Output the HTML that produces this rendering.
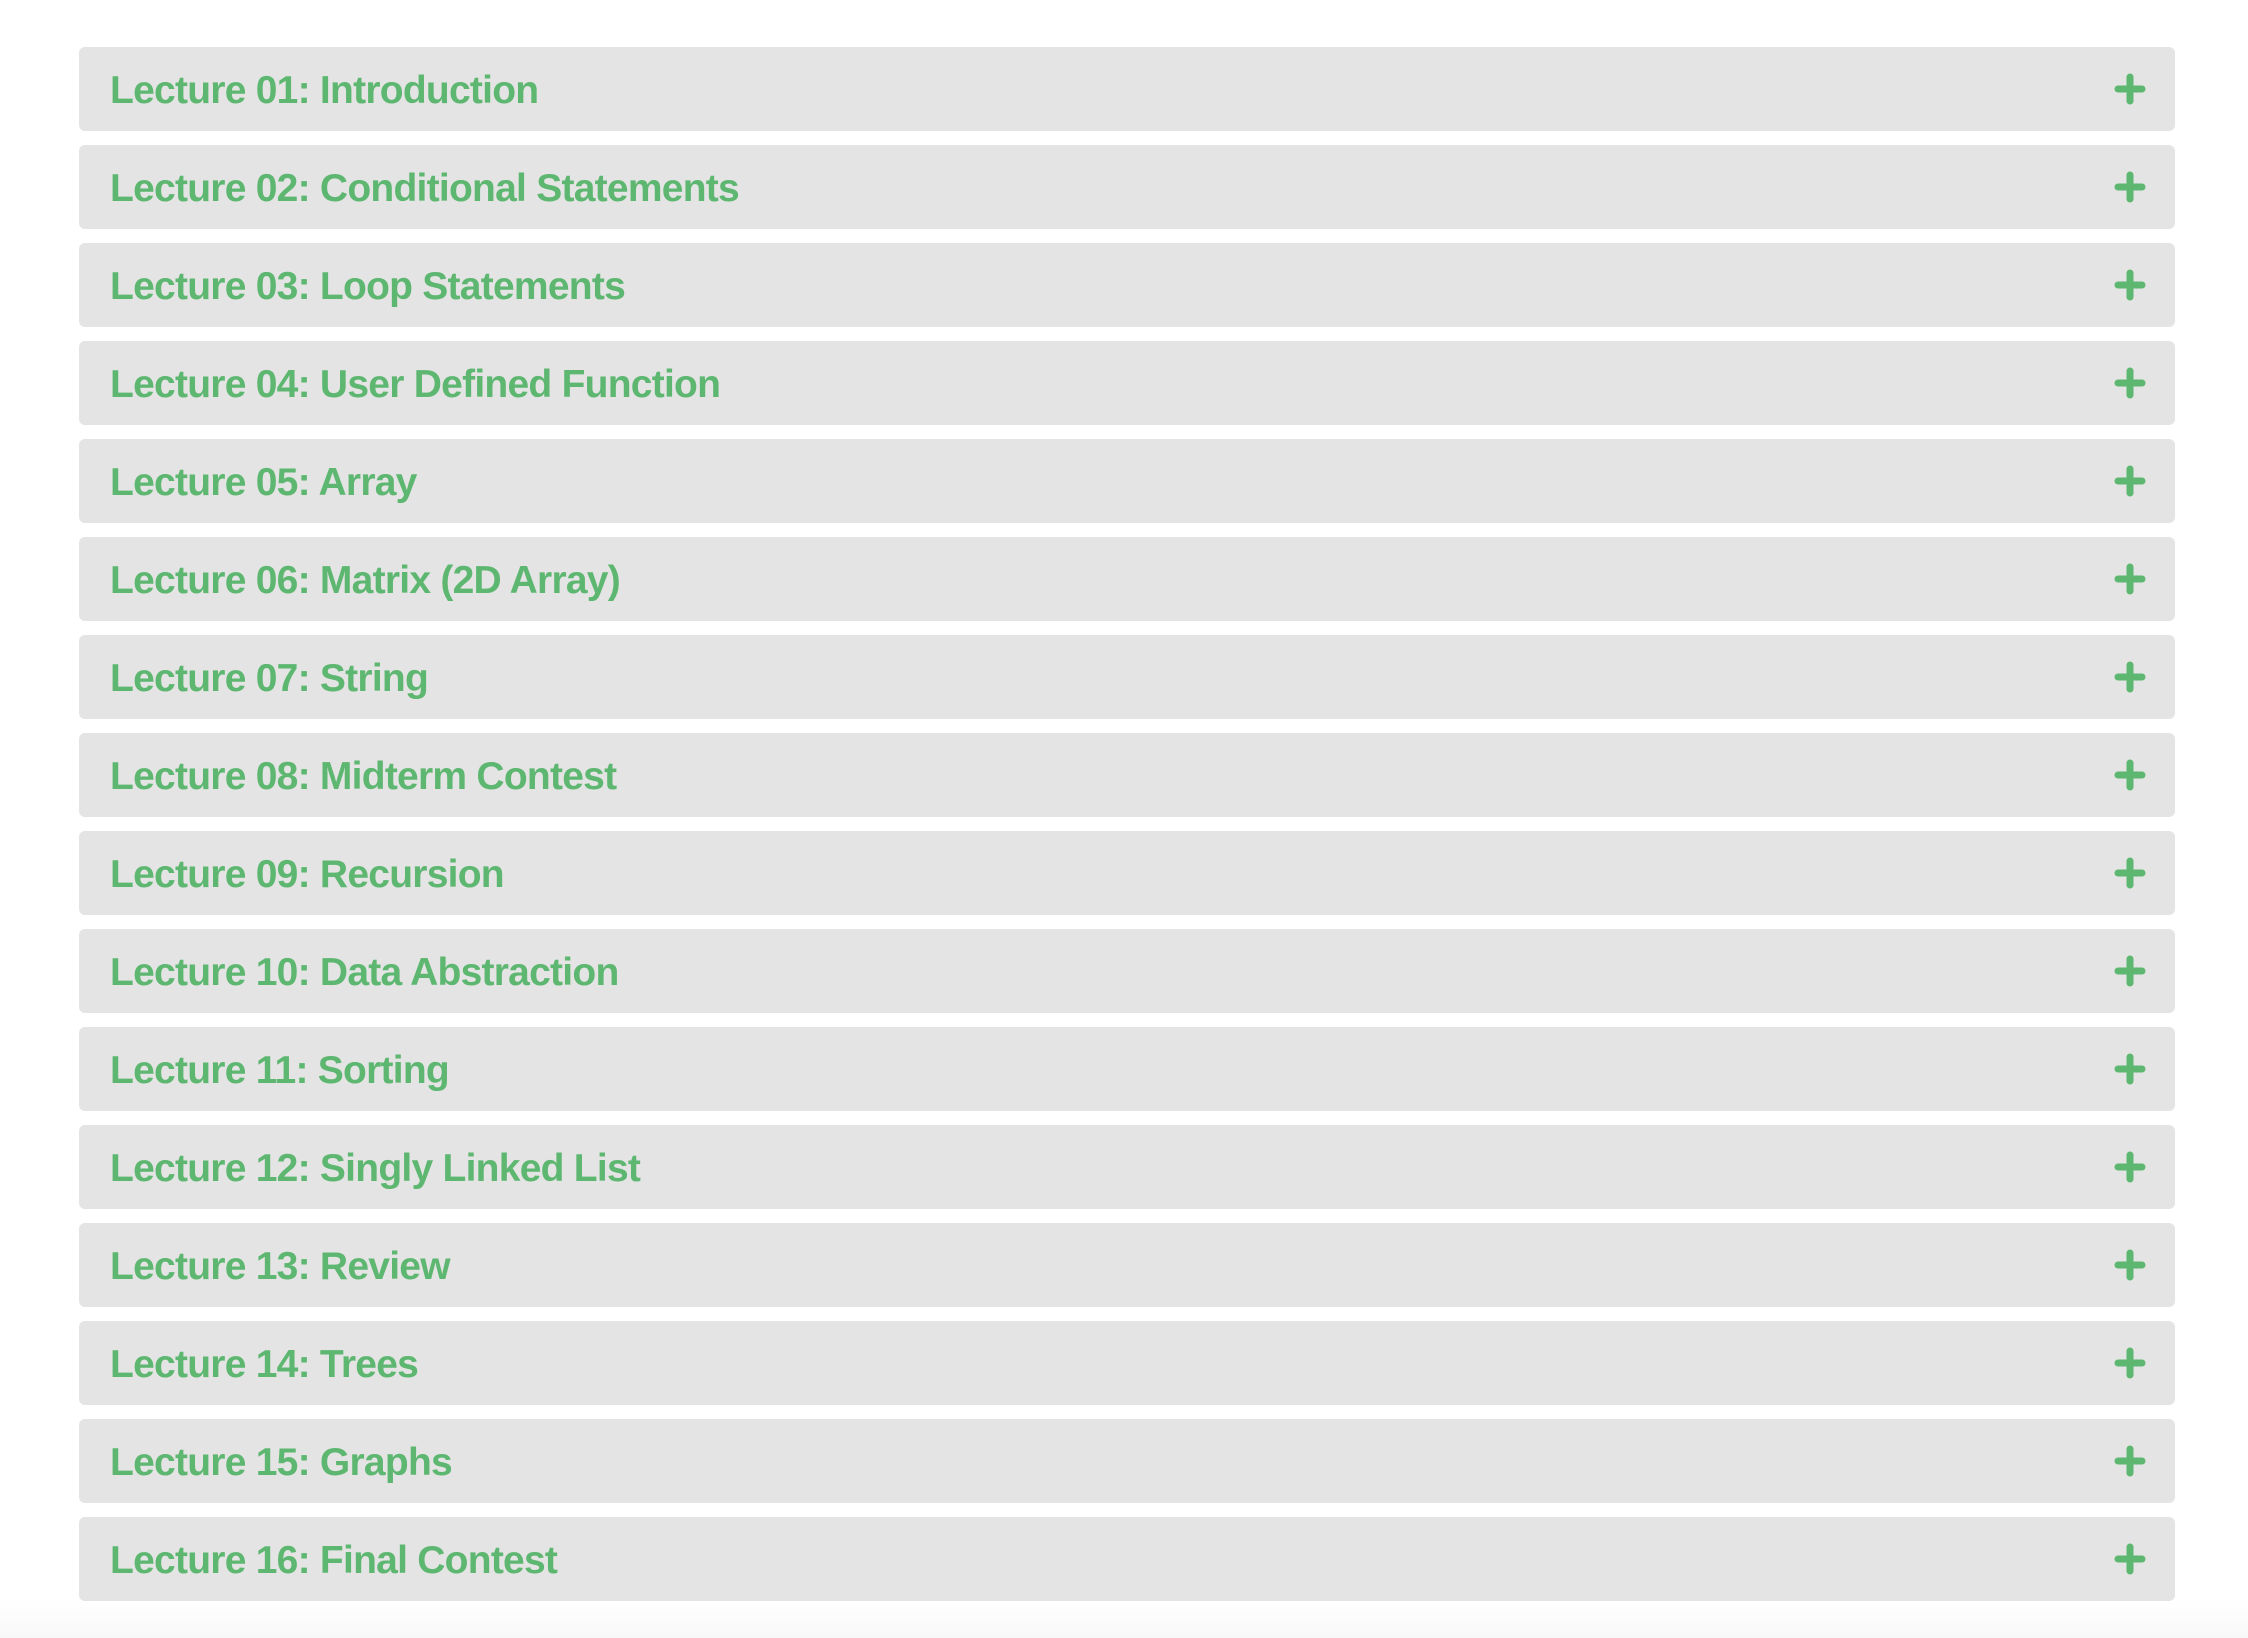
<!DOCTYPE html>
<html><head><meta charset="utf-8"><style>
html,body{margin:0;padding:0;background:#fff;}
body{width:2248px;height:1638px;position:relative;overflow:hidden;font-family:"Liberation Sans",sans-serif;}
.fade{position:absolute;left:0;right:0;top:1600px;height:38px;background:linear-gradient(#fff,#f8f8f8);}
.item{position:absolute;left:79px;width:2096px;height:84px;background:#e4e4e4;border-radius:6px;}
.item span{position:absolute;left:31px;top:2px;line-height:84px;font-size:39px;font-weight:bold;color:#5db770;letter-spacing:-0.75px;white-space:nowrap;}
.item svg{position:absolute;left:2035px;top:26px;}
</style></head><body>
<div class="fade"></div>
<div class="item" style="top:47px"><span>Lecture 01: Introduction</span><svg width="32" height="32"><path d="M16 4V28M4 16H28" stroke="#5db770" stroke-width="7" stroke-linecap="round"/></svg></div>
<div class="item" style="top:145px"><span>Lecture 02: Conditional Statements</span><svg width="32" height="32"><path d="M16 4V28M4 16H28" stroke="#5db770" stroke-width="7" stroke-linecap="round"/></svg></div>
<div class="item" style="top:243px"><span>Lecture 03: Loop Statements</span><svg width="32" height="32"><path d="M16 4V28M4 16H28" stroke="#5db770" stroke-width="7" stroke-linecap="round"/></svg></div>
<div class="item" style="top:341px"><span>Lecture 04: User Defined Function</span><svg width="32" height="32"><path d="M16 4V28M4 16H28" stroke="#5db770" stroke-width="7" stroke-linecap="round"/></svg></div>
<div class="item" style="top:439px"><span>Lecture 05: Array</span><svg width="32" height="32"><path d="M16 4V28M4 16H28" stroke="#5db770" stroke-width="7" stroke-linecap="round"/></svg></div>
<div class="item" style="top:537px"><span>Lecture 06: Matrix (2D Array)</span><svg width="32" height="32"><path d="M16 4V28M4 16H28" stroke="#5db770" stroke-width="7" stroke-linecap="round"/></svg></div>
<div class="item" style="top:635px"><span>Lecture 07: String</span><svg width="32" height="32"><path d="M16 4V28M4 16H28" stroke="#5db770" stroke-width="7" stroke-linecap="round"/></svg></div>
<div class="item" style="top:733px"><span>Lecture 08: Midterm Contest</span><svg width="32" height="32"><path d="M16 4V28M4 16H28" stroke="#5db770" stroke-width="7" stroke-linecap="round"/></svg></div>
<div class="item" style="top:831px"><span>Lecture 09: Recursion</span><svg width="32" height="32"><path d="M16 4V28M4 16H28" stroke="#5db770" stroke-width="7" stroke-linecap="round"/></svg></div>
<div class="item" style="top:929px"><span>Lecture 10: Data Abstraction</span><svg width="32" height="32"><path d="M16 4V28M4 16H28" stroke="#5db770" stroke-width="7" stroke-linecap="round"/></svg></div>
<div class="item" style="top:1027px"><span>Lecture 11: Sorting</span><svg width="32" height="32"><path d="M16 4V28M4 16H28" stroke="#5db770" stroke-width="7" stroke-linecap="round"/></svg></div>
<div class="item" style="top:1125px"><span>Lecture 12: Singly Linked List</span><svg width="32" height="32"><path d="M16 4V28M4 16H28" stroke="#5db770" stroke-width="7" stroke-linecap="round"/></svg></div>
<div class="item" style="top:1223px"><span>Lecture 13: Review</span><svg width="32" height="32"><path d="M16 4V28M4 16H28" stroke="#5db770" stroke-width="7" stroke-linecap="round"/></svg></div>
<div class="item" style="top:1321px"><span>Lecture 14: Trees</span><svg width="32" height="32"><path d="M16 4V28M4 16H28" stroke="#5db770" stroke-width="7" stroke-linecap="round"/></svg></div>
<div class="item" style="top:1419px"><span>Lecture 15: Graphs</span><svg width="32" height="32"><path d="M16 4V28M4 16H28" stroke="#5db770" stroke-width="7" stroke-linecap="round"/></svg></div>
<div class="item" style="top:1517px"><span>Lecture 16: Final Contest</span><svg width="32" height="32"><path d="M16 4V28M4 16H28" stroke="#5db770" stroke-width="7" stroke-linecap="round"/></svg></div>
</body></html>
